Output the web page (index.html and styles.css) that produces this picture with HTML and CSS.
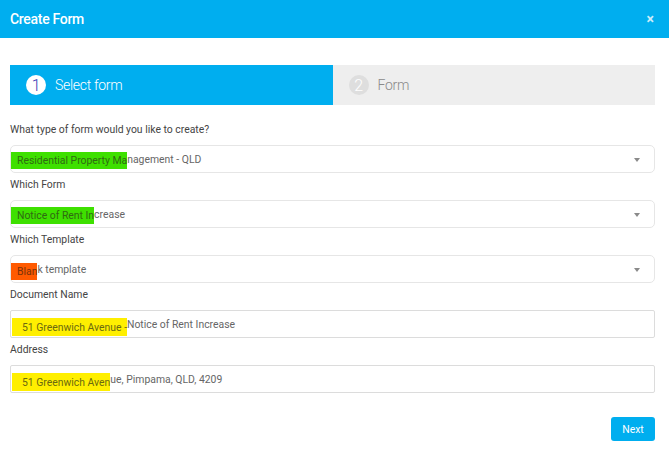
FILE: index.html
```html
<!DOCTYPE html>
<html lang="en">
<head>
  <meta charset="UTF-8">
  <meta name="viewport" content="width=device-width, initial-scale=1.0">
  <title>Create Form</title>
  <link rel="stylesheet" href="styles.css">
</head>
<body>
  <div class="modal">
    <div class="modal-header">
      <h2>Create Form</h2>
      <span class="close">&times;</span>
    </div>

    <div class="modal-body">
      <div class="steps">
        <div class="step active"><span class="num">1</span>Select form</div>
        <div class="step"><span class="num">2</span>Form</div>
      </div>

      <div class="fields">
        <div class="field">
          <label>What type of form would you like to create?</label>
          <div class="select"><span class="mark green">Residential Property Ma</span>nagement - QLD</div>
        </div>
        <div class="field">
          <label>Which Form</label>
          <div class="select"><span class="mark green">Notice of Rent In</span>crease</div>
        </div>
        <div class="field">
          <label>Which Template</label>
          <div class="select"><span class="mark orange">Blan</span>k template</div>
        </div>
        <div class="field">
          <label>Document Name</label>
          <div class="input"><span class="mark yellow">51 Greenwich Avenue - </span>Notice of Rent Increase</div>
        </div>
        <div class="field">
          <label>Address</label>
          <div class="input"><span class="mark yellow">51 Greenwich Aven</span>ue, Pimpama, QLD, 4209</div>
        </div>
      </div>

      <div class="actions">
        <button type="button">Next</button>
      </div>
    </div>
  </div>
</body>
</html>
```

FILE: styles.css
```css
body {
  margin: 0;
  font-family: Roboto, "Liberation Sans", Arial, sans-serif;
  background: #fff;
  color: #444;
}
.modal-header {
  height: 38px;
  background: #00aeef;
  display: flex;
  align-items: center;
  justify-content: space-between;
  padding: 0 15px 0 10px;
}
.modal-header h2 {
  margin: 0;
  font-size: 14px;
  font-weight: 500;
  color: #fff;
  letter-spacing: -0.3px;
}
.close {
  color: #c9ecfa;
  font-size: 14px;
  font-weight: 700;
  line-height: 1;
  margin-top: -1px;
}
.modal-body {
  padding: 27px 14px 0 10px;
}

/* wizard steps */
.steps {
  display: flex;
  height: 40px;
}
.step {
  flex: 1;
  display: flex;
  align-items: center;
  padding-left: 16px;
  background: #eeeeee;
  color: #8a8a8a;
  font-size: 14px;
  font-weight: 300;
  letter-spacing: -0.3px;
}
.step.active {
  background: #00aeef;
  color: #fff;
}
.num {
  width: 20px;
  height: 20px;
  border-radius: 50%;
  background: #dedede;
  color: #fff;
  font-size: 16px;
  font-weight: 300;
  display: flex;
  align-items: center;
  justify-content: center;
  margin-right: 9px;
}
.step.active .num {
  background: #fff;
  color: #3b3bb5;
}

/* form fields */
.fields {
  margin-top: 17px;
  display: flex;
  flex-direction: column;
  gap: 4px;
}
.field label {
  display: block;
  font-size: 10.4px;
  line-height: 16px;
  color: #444;
  margin-bottom: 7px;
}
.select, .input {
  height: 28px;
  box-sizing: border-box;
  display: flex;
  align-items: center;
  font-size: 10.4px;
  color: #666;
  position: relative;
}
.select {
  border: 1px solid #e6e6e6;
  border-radius: 5px;
  padding-left: 6px;
}
.select::after {
  content: "";
  position: absolute;
  right: 14px;
  top: 12px;
  border-left: 3px solid transparent;
  border-right: 3px solid transparent;
  border-top: 4px solid #8a8a8a;
}
.input {
  border: 1px solid #dcdcdc;
  border-radius: 2px;
  padding-left: 11px;
}

/* marker highlights over the values */
.mark {
  display: inline-flex;
  align-items: center;
  height: 17px;
  margin-left: -6px;
  padding-left: 6px;
}
.mark.green {
  background: #3ee000;
  color: #2f6b12;
  margin-top: 2px;
}
.mark.orange {
  background: #ff5a00;
  color: #7a3208;
  margin-top: 4px;
}
.mark.yellow {
  background: #ffef00;
  color: #6b6a10;
  height: 18px;
  margin-left: -10px;
  padding-left: 10px;
  margin-top: 6px;
}

.actions {
  display: flex;
  justify-content: flex-end;
  margin-top: 24px;
}
.actions button {
  width: 44px;
  height: 24px;
  border: none;
  border-radius: 3px;
  background: #00aeef;
  color: #fff;
  font-family: inherit;
  font-size: 10.4px;
  cursor: pointer;
}
```
